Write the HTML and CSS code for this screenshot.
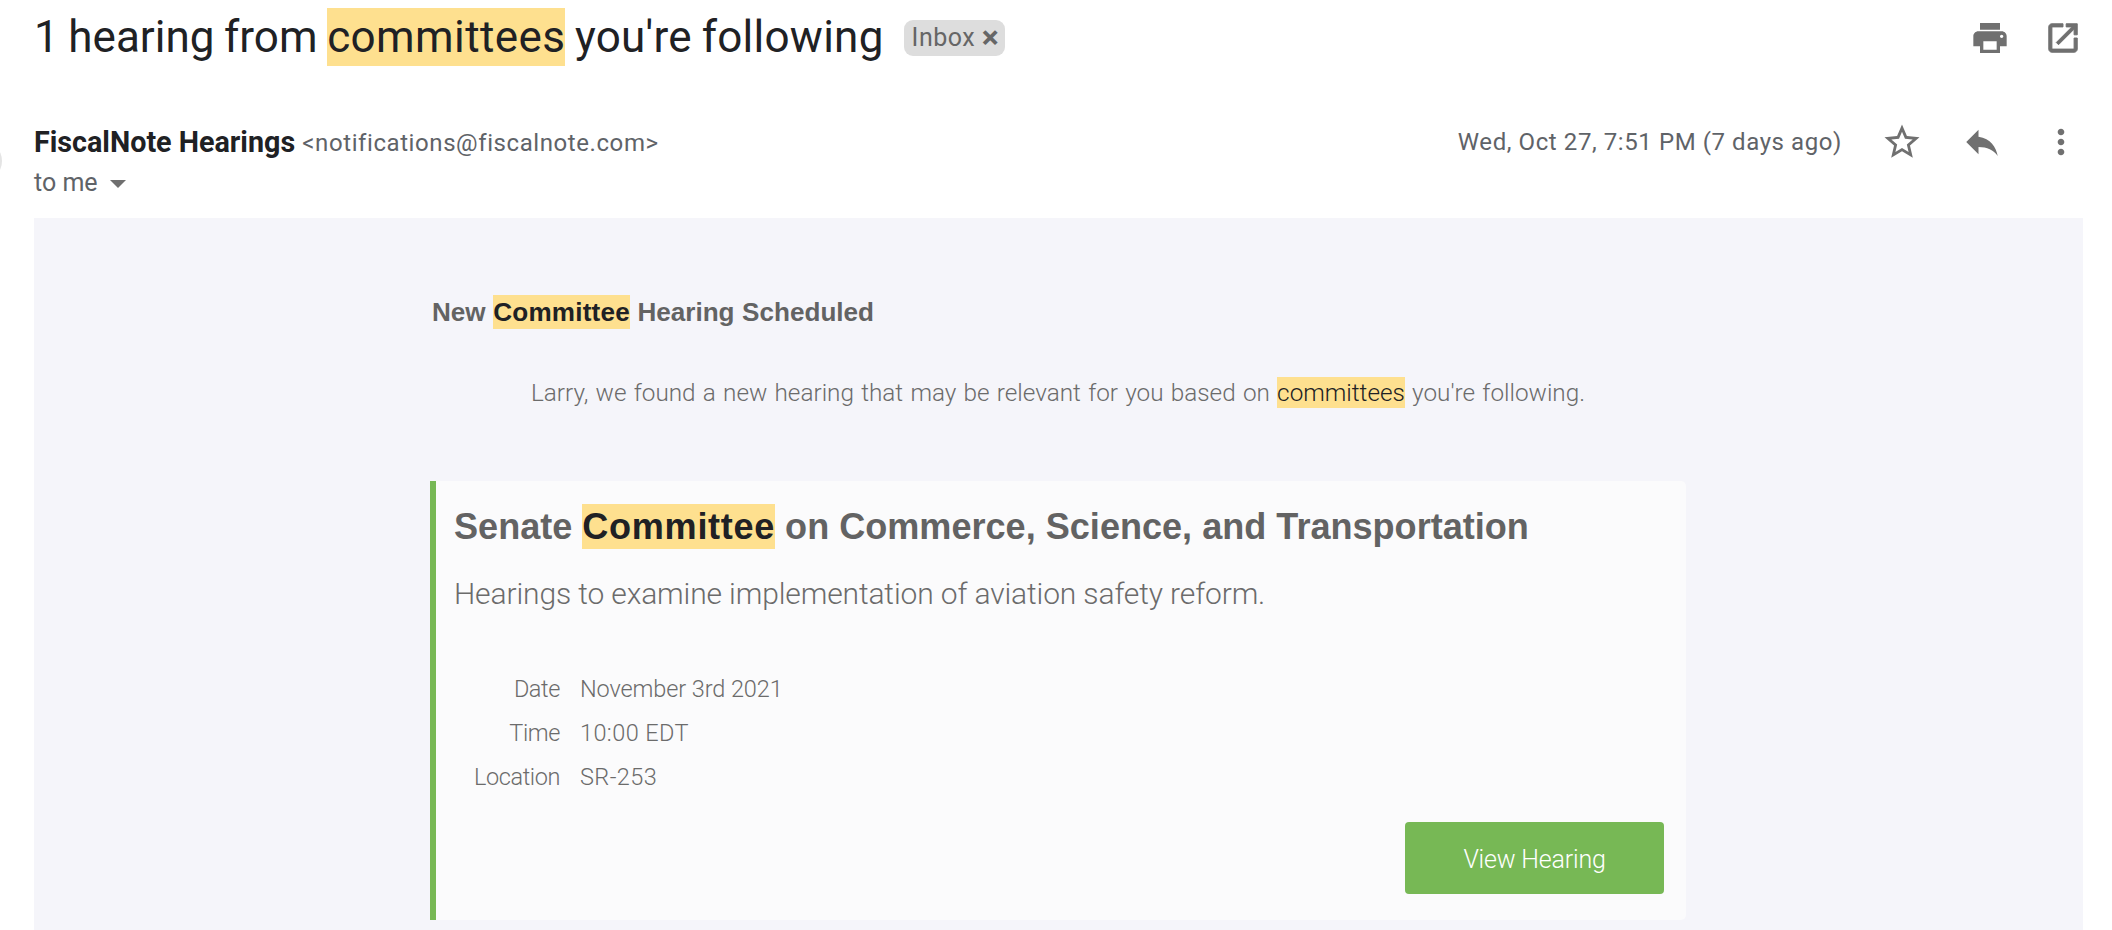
FILE: index.html
```html
<!DOCTYPE html>
<html lang="en">
<head>
<meta charset="utf-8">
<title>1 hearing from committees you're following</title>
<link rel="stylesheet" href="styles.css">
</head>
<body>
<div class="page">
  <span class="avatar"></span>
  <header class="subject-row">
    <h1 class="subject">1 hearing from <mark class="hl hl-subject">committees</mark> <span class="subject-end">you're following</span></h1>
    <span class="chip">Inbox <span class="chip-x">×</span></span>
    <div class="top-icons">
      <svg class="icon-print" viewBox="0 0 24 24"><path d="M19 8H5c-1.66 0-3 1.34-3 3v6h4v4h12v-4h4v-6c0-1.66-1.34-3-3-3zm-3 11H8v-5h8v5zm3-7c-.55 0-1-.45-1-1s.45-1 1-1 1 .45 1 1-.45 1-1 1zm-1-9H6v4h12V3z"/></svg>
      <svg class="icon-open" viewBox="0 0 24 24"><path d="M19 19H5V5h7V3H5c-1.11 0-2 .9-2 2v14c0 1.1.89 2 2 2h14c1.1 0 2-.9 2-2v-7h-2v7zM14 3v2h3.59l-9.83 9.83 1.41 1.41L19 6.41V10h2V3h-7z"/></svg>
    </div>
  </header>
  <section class="sender-row">
    <div class="sender-left">
      <div class="from"><strong class="name">FiscalNote Hearings</strong> <span class="addr">&lt;notifications@fiscalnote.com&gt;</span></div>
      <div class="to">to me <span class="caret"></span></div>
    </div>
    <div class="sender-right">
      <span class="date">Wed, Oct 27, 7:51 PM (7 days ago)</span>
      <svg class="icon-star" viewBox="0 0 24 24"><path d="M22 9.24l-7.19-.62L12 2 9.19 8.63 2 9.24l5.46 4.73L5.82 21 12 17.27 18.18 21l-1.63-7.03L22 9.24zM12 15.4l-3.76 2.27 1-4.28-3.32-2.88 4.38-.38L12 6.1l1.71 4.04 4.38.38-3.32 2.88 1 4.28L12 15.4z"/></svg>
      <svg class="icon-reply" viewBox="0 0 24 24"><path d="M10 9V5l-7 7 7 7v-4.1c5 0 8.5 1.6 11 5.1-1-5-4-10-11-11z"/></svg>
      <svg class="icon-more" viewBox="0 0 24 24"><path d="M12 8c1.1 0 2-.9 2-2s-.9-2-2-2-2 .9-2 2 .9 2 2 2zm0 2c-1.1 0-2 .9-2 2s.9 2 2 2 2-.9 2-2-.9-2-2-2zm0 6c-1.1 0-2 .9-2 2s.9 2 2 2 2-.9 2-2-.9-2-2-2z"/></svg>
    </div>
  </section>
  <main class="mail">
    <div class="mail-inner">
      <h2 class="headline">New <mark class="hl hl-head">Committee</mark> Hearing Scheduled</h2>
      <p class="intro">Larry, we found a new hearing that may be relevant for you based on <mark class="hl hl-intro">committees</mark> you're following.</p>
      <article class="card">
        <h3 class="card-title">Senate <mark class="hl hl-card">Committee</mark> on Commerce, Science, and Transportation</h3>
        <p class="card-sub">Hearings to examine implementation of aviation safety reform.</p>
        <dl class="details">
          <dt>Date</dt><dd>November 3rd 2021</dd>
          <dt>Time</dt><dd class="num">10:00 EDT</dd>
          <dt>Location</dt><dd class="num">SR-253</dd>
        </dl>
        <div class="actions"><a class="btn">View Hearing</a></div>
      </article>
    </div>
  </main>
</div>
</body>
</html>
```
FILE: styles.css
```css
* { box-sizing: border-box; }
html, body { margin: 0; height: 100%; background: #fff; overflow: hidden; }
.page { position: relative; width: 2112px; height: 930px; display: flex; flex-direction: column; padding-left: 34px; padding-right: 29px; font-family: Roboto, "Liberation Sans", sans-serif; }
.avatar { position: absolute; left: -38px; top: 141px; width: 40px; height: 40px; border-radius: 50%; background: #e4e4e4; }
.hl { background: #fee08f; color: #202124; }
.hl-subject { padding: 3px 0; letter-spacing: 0.4px; }
.subject-end { letter-spacing: 0.25px; }
.hl-head { padding: 2px 0; letter-spacing: 0.2px; }
.hl-intro { padding: 1px 0; }
.hl-card { padding: 2px 0; letter-spacing: 0.7px; }
.subject-row { display: flex; align-items: center; height: 76px; }
.subject { margin: 0 0 2px; font-weight: 400; font-size: 44px; word-spacing: -1.3px; line-height: 56px; color: #202124; }
.chip { margin-left: 20px; width: 101px; height: 36px; background: #dddddd; border-radius: 9px; color: #666; font-size: 25px; line-height: 36px; padding-left: 8px; letter-spacing: 0.5px; white-space: nowrap; }
.chip-x { font-weight: 700; font-size: 32px; line-height: 30px; vertical-align: -2px; letter-spacing: 0; }
.top-icons { margin-left: auto; display: flex; gap: 34px; align-items: center; margin-right: 1px; }
.top-icons svg { fill: #707070; display: block; }
.icon-print { width: 40px; height: 40px; }
.icon-open { width: 38px; height: 38px; stroke: #707070; stroke-width: 0.6; }
.sender-row { display: flex; justify-content: space-between; height: 142px; padding-top: 49px; }
.from { font-size: 25px; line-height: 34px; color: #5f6368; white-space: nowrap; }
.name { color: #202124; font-weight: 700; font-size: 28.7px; }
.addr { font-size: 24px; letter-spacing: 0.58px; margin-left: 1px; vertical-align: 1px; }
.to { font-size: 25px; line-height: 34px; margin-top: 5px; color: #5f6368; }
.caret { display: inline-block; border-top: 8px solid #6f6f6f; border-left: 8px solid transparent; border-right: 8px solid transparent; margin-left: 6px; vertical-align: middle; }
.sender-right { display: flex; align-items: flex-start; height: 44px; }
.date { font-size: 24px; line-height: 34px; letter-spacing: 0.58px; color: #5f6368; margin-right: 39px; }
.sender-right svg { fill: #707070; display: block; }
.icon-star { width: 42px; height: 42px; margin-top: -4px; }
.icon-reply { width: 42px; height: 42px; margin-left: 38px; margin-top: -4px; }
.icon-more { width: 40px; height: 40px; margin-left: 38px; margin-top: -3px; margin-right: 2px; }
.mail { flex: 1; background: #f5f5fa; padding-left: 396px; }
.mail-inner { width: 1256px; font-family: "Liberation Sans", Arial, sans-serif; color: #636363; }
.headline { margin: 0; padding-top: 78px; font-size: 26.1px; word-spacing: 0.3px; line-height: 32px; font-weight: 700; padding-left: 2px; }
.intro { margin: 49px 0 0; text-align: center; font-family: Roboto, sans-serif; font-weight: 300; color: #6b6b6b; font-size: 24.3px; word-spacing: 1.3px; line-height: 32px; }
.card { margin-top: 72px; height: 439px; background: #fbfbfc; border-left: 6px solid #77b855; border-radius: 0 5px 5px 0; padding: 24px 22px 26px 18px; display: flex; flex-direction: column; }
.card-title { margin: 0; font-size: 36.1px; line-height: 44px; font-weight: 700; }
.card-sub { margin: 23px 0 0; font-family: Roboto, sans-serif; font-weight: 300; color: #6b6b6b; font-size: 30px; letter-spacing: -0.13px; line-height: 44px; }
.details { margin: 57px 0 0; display: grid; grid-template-columns: 106px auto; column-gap: 20px; row-gap: 12px; justify-content: start; font-family: Roboto, sans-serif; font-weight: 300; color: #6b6b6b; font-size: 23.5px; letter-spacing: -0.1px; line-height: 32px; }
.details dt { text-align: right; letter-spacing: -0.4px; }
.details dd { margin: 0; }
.details .num { letter-spacing: 0.4px; }
.actions { margin-top: auto; display: flex; justify-content: flex-end; }
.btn { width: 259px; height: 72px; padding-top: 3px; background: #77b855; color: #fff; border-radius: 4px; display: flex; align-items: center; justify-content: center; font-family: Roboto, sans-serif; font-weight: 300; font-size: 25px; letter-spacing: -0.2px; }
```
